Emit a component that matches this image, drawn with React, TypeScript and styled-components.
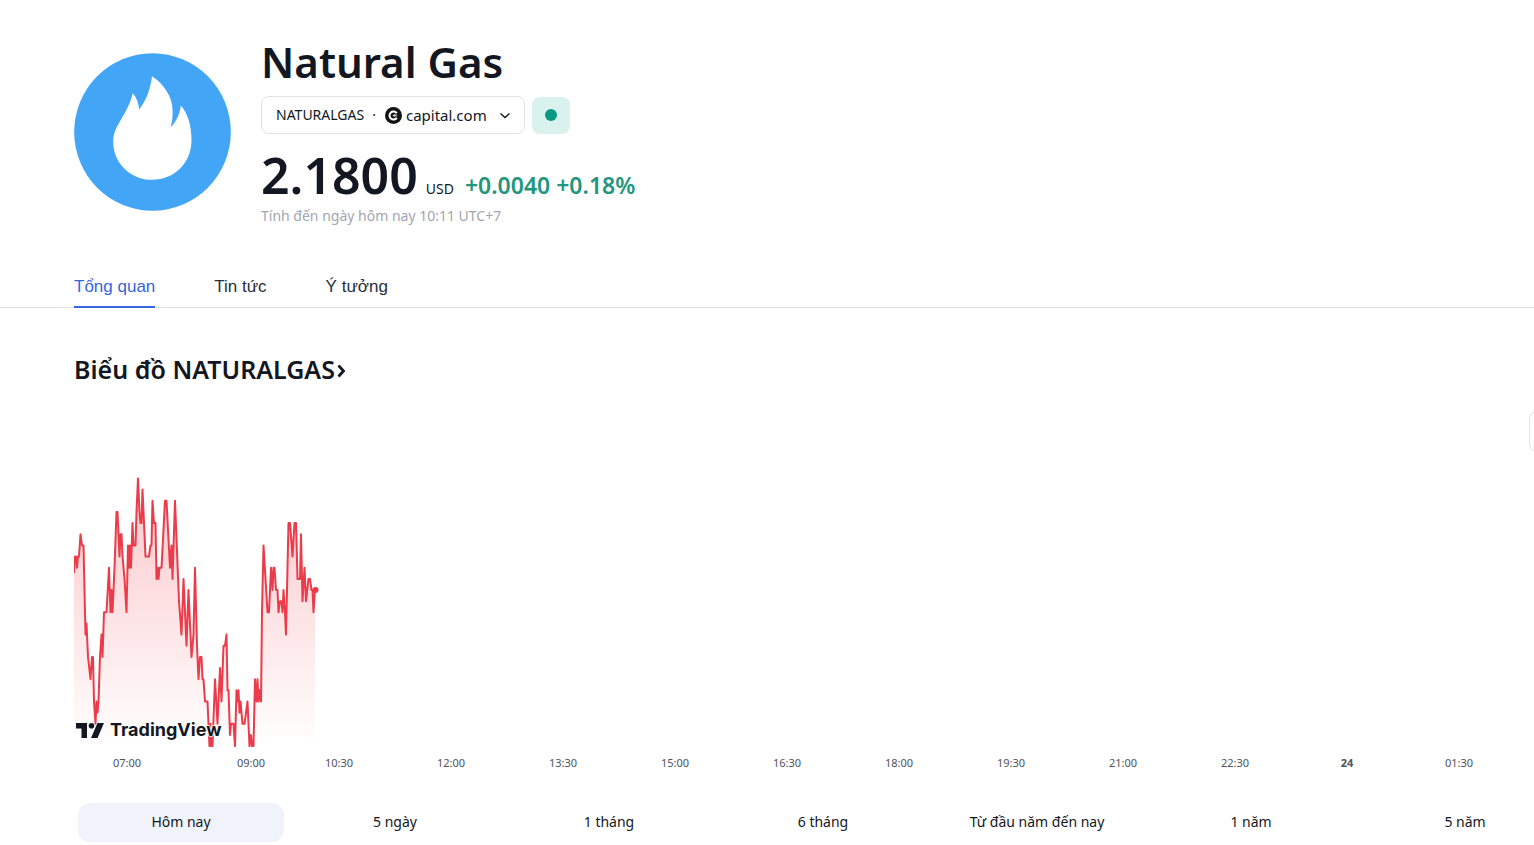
import React from "react";
import styled, { createGlobalStyle } from "styled-components";

const ui = `"Trebuchet MS", "Noto Sans", sans-serif`;

const GlobalStyle = createGlobalStyle`
  * { box-sizing: border-box; }
  body {
    margin: 0;
    background: #fff;
    color: #131722;
    font-family: ${ui};
    overflow-x: hidden;
  }
  h1, h2, p { margin: 0; }
  button { font: inherit; color: inherit; cursor: pointer; }
`;

const Page = styled.div`
  overflow: hidden;
  padding: 34px 0 4px;
`;

const Header = styled.header`
  display: flex;
  gap: 30px;
  padding-left: 74px;
`;

const Logo = styled.svg`
  width: 157px;
  height: 158px;
  margin-top: 19px;
  flex: none;
`;

const Title = styled.h1`
  font-size: 42px;
  line-height: 56px;
  font-weight: 600;
`;

const SymbolRow = styled.div`
  display: flex;
  gap: 7px;
  margin-top: 6px;
`;

const SymbolButton = styled.button`
  display: flex;
  align-items: center;
  width: 264px;
  height: 38px;
  padding: 0 13px 0 14px;
  background: #fff;
  border: 1px solid #e0e3eb;
  border-radius: 8px;
  font-size: 14px;
  line-height: 20px;
`;

const Dot = styled.span`
  margin: 0 9px 0 8px;
`;

const Exchange = styled.span`
  display: flex;
  align-items: center;
  gap: 4px;
  flex: 1;
  font-size: 15px;
`;

const Status = styled.button`
  display: flex;
  align-items: center;
  justify-content: center;
  width: 38px;
  height: 37px;
  margin-top: 1px;
  padding: 0 0 1px;
  border: 0;
  border-radius: 8px;
  background: #daf2ee;

  &::before {
    content: "";
    width: 12px;
    height: 12px;
    border-radius: 50%;
    background: #089981;
  }
`;

const PriceRow = styled.div`
  display: flex;
  align-items: baseline;
  margin-top: 13px;
  line-height: 20px;
  white-space: nowrap;
`;

const Price = styled.span`
  font-size: 50px;
  line-height: 56px;
  font-weight: 600;
`;

const Currency = styled.span`
  margin-left: 8px;
  font-size: 14px;
`;

const Change = styled.span`
  margin-left: 11px;
  font-size: 23px;
  font-weight: 600;
  color: #22967f;
`;

const AsOf = styled.p`
  margin-top: 3px;
  font-size: 14px;
  line-height: 20px;
  color: #a3a6af;
`;

const Tabs = styled.nav`
  display: flex;
  gap: 59px;
  margin-top: 38px;
  padding-left: 74px;
  border-bottom: 1px solid #e0e3eb;
  font-family: "Liberation Sans", Arial, sans-serif;
  font-size: 17px;
  line-height: 20px;
`;

const Tab = styled.a<{ $active?: boolean }>`
  padding: 13px 0 9px;
  margin-bottom: -1px;
  border-bottom: 2px solid ${(p) => (p.$active ? "#3565e0" : "transparent")};
  color: ${(p) => (p.$active ? "#3565e0" : "#2a2e39")};
  text-decoration: none;
`;

const Section = styled.main`
  margin: 45px -38px 0 74px;
`;

const Heading = styled.h2`
  font-size: 25px;
  line-height: 32px;
  font-weight: 600;

  a {
    display: inline-flex;
    align-items: center;
    gap: 2px;
    color: inherit;
    text-decoration: none;
  }

  svg { margin-top: 4px; }
`;

const Toolbar = styled.div`
  display: flex;
  justify-content: flex-end;
  margin-top: 26px;
`;

const ToolButton = styled.button`
  width: 43px;
  height: 41px;
  background: #fff;
  border: 1px solid #e0e3eb;
  border-radius: 8px;
`;

const Chart = styled.div`
  position: relative;
  height: 296px;
`;

const Plot = styled.svg`
  display: block;
  width: 246px;
  height: 296px;
`;

const Brand = styled.a`
  position: absolute;
  left: 2px;
  bottom: 4px;
  display: flex;
  align-items: center;
  gap: 6px;
  color: #131722;
  font-family: Inter, sans-serif;
  font-size: 18px;
  line-height: 28px;
  font-weight: 700;
  text-decoration: none;
  text-shadow: 0 0 1px #fff, 1px 0 1px #fff, -1px 0 1px #fff, 0 1px 1px #fff, 0 -1px 1px #fff;
`;

const Axis = styled.div`
  display: grid;
  grid-template-columns: 53fr 124fr 88fr repeat(10, 112fr) 75fr;
  margin: 5px 38px 0 0;
  font-size: 11px;
  line-height: 20px;
  color: #50535e;

  &::before { content: ""; }
`;

const Tick = styled.span<{ $strong?: boolean }>`
  display: flex;
  justify-content: center;
  width: 0;
  white-space: nowrap;
  font-weight: ${(p) => (p.$strong ? 700 : 400)};
`;

const Ranges = styled.div`
  display: grid;
  grid-template-columns: repeat(7, 1fr);
  gap: 8px;
  margin-top: 30px;
  padding: 0 4px;
`;

const Range = styled.button<{ $active?: boolean }>`
  height: 39px;
  padding: 0 0 1px;
  border: 0;
  border-radius: 12px;
  background: ${(p) => (p.$active ? "#f0f3fa" : "transparent")};
  font-size: 14px;
  line-height: 20px;
`;

// Each point is [x, price level], level 0 being the day's high.
const points: [number, number][] = [
  [0, 8.5], [1, 7], [2, 7], [3, 8], [4, 7], [5, 7], [6.5, 5], [8, 6], [9.5, 6], [11.5, 14], [12.5, 13],
  [14, 16], [16.5, 18], [18, 16], [19, 16], [20, 20], [21.5, 22], [22.5, 20], [23.5, 21], [24.5, 20],
  [26, 16], [27.5, 14], [28.5, 16], [30, 12], [32.5, 12], [35, 8], [36.5, 12], [37.5, 10], [38.5, 12],
  [40.5, 8], [42.5, 3], [43.5, 3], [45.5, 7], [46.5, 5], [47.5, 5], [48.5, 7], [50.5, 9], [52.5, 12],
  [54, 6], [55, 8], [56, 6], [57, 8], [58.5, 4], [59.5, 6], [61.5, 6], [62.5, 3], [64, 0], [65.5, 3],
  [66.5, 4], [67.5, 4], [68.5, 1], [71.5, 7], [75, 7], [76.5, 6], [77.5, 6], [78.5, 2], [80, 4],
  [81.5, 4], [82.5, 9], [83.5, 8], [84.5, 9], [85.5, 8], [87.5, 8], [91, 2], [92.5, 2], [96, 8],
  [97.5, 6], [98.5, 9], [101, 2], [105, 11], [107.5, 14], [109.5, 9], [112.5, 15], [114.5, 10],
  [117.5, 16], [119.5, 14], [121, 8], [123, 15], [124.5, 18], [126, 16], [127.5, 16], [128.5, 18],
  [129.5, 18], [131, 20], [133.5, 20], [135.5, 24], [136.5, 22], [137.5, 24], [138.5, 24], [141, 18],
  [143.5, 22], [146, 17], [147.5, 20], [149.5, 15], [151, 15], [152.5, 14], [153.5, 19], [154.5, 19],
  [156, 23], [157, 22], [159.5, 22], [161, 24], [162.5, 19], [163.5, 20], [164.5, 19], [165.5, 21],
  [166.5, 20], [168.5, 22], [170.5, 22], [173.5, 20], [175.5, 24], [177, 23], [178, 24], [179.5, 24],
  [181, 18], [182.5, 20], [183.5, 18], [184.5, 20], [185.5, 19], [187, 20], [188, 12], [189.5, 6],
  [193.5, 12], [195, 12], [197, 8], [198.5, 10], [199.5, 8], [200.5, 8], [202, 10], [203.5, 10],
  [204.5, 12], [206, 11], [207.5, 11], [208.5, 12], [209.5, 10], [211, 12], [212, 14], [214.5, 4],
  [216, 4], [218.5, 7], [220.5, 4], [222, 4], [223.5, 9], [226, 9], [227, 5], [228.5, 11],
  [230.5, 8], [232, 11], [234.5, 9], [236, 9], [237.5, 10], [238.5, 10], [239.5, 12], [241, 10],
];

const levelY = (level: number) => 26.5 + level * 11.15;
const line = points.map(([x, l], i) => `${i ? "L" : "M"}${x} ${levelY(l).toFixed(1)}`).join("");

const ticks = ["07:00", "09:00", "10:30", "12:00", "13:30", "15:00", "16:30", "18:00", "19:30", "21:00", "22:30", "24", "01:30"];
const ranges = ["Hôm nay", "5 ngày", "1 tháng", "6 tháng", "Từ đầu năm đến nay", "1 năm", "5 năm"];

export default function App() {
  return (
    <Page>
      <GlobalStyle />
      <Header>
        <Logo viewBox="0 0 473 474" aria-hidden="true">
          <ellipse cx="236.500" cy="237" rx="236" ry="237" fill="#42a5f5" />
          <path
            fill="#fff"
            d="M177 120C189 133 195 150 196 169C216 145 230 110 235 69C270 92 297 130 297 172C298 192 295 208 291 223C308 205 318 185 322 157C342 180 354 215 354 262C354 330 302 381 236 381C170 381 118 330 118 266C118 240 128 222 140 202C158 172 170 150 177 120Z"
          />
        </Logo>
        <div>
          <Title>Natural Gas</Title>
          <SymbolRow>
            <SymbolButton type="button">
              NATURALGAS
              <Dot>·</Dot>
              <Exchange>
                <svg width="17" height="17" viewBox="0 0 17 17" aria-hidden="true">
                  <circle cx="8.500" cy="8.500" r="8.500" fill="#131313" />
                  <path d="M11.800 6.200A4 4 0 1 0 11.800 10.800" fill="none" stroke="#fff" strokeWidth="2" />
                  <path d="M7.500 8.500L9.800 7V10Z" fill="#fff" />
                  <circle cx="11" cy="8.500" r="1.200" fill="#a8a08c" />
                </svg>
                capital.com
              </Exchange>
              <svg width="12" height="12" viewBox="0 0 12 12" fill="none" stroke="#131722" strokeWidth="1.500" aria-hidden="true">
                <path d="M1.500 4.500L6 8.500L10.500 4.500" />
              </svg>
            </SymbolButton>
            <Status type="button" aria-label="Thị trường mở cửa" />
          </SymbolRow>
          <PriceRow>
            <Price>2.1800</Price>
            <Currency>USD</Currency>
            <Change>+0.0040 +0.18%</Change>
          </PriceRow>
          <AsOf>Tính đến ngày hôm nay 10:11 UTC+7</AsOf>
        </div>
      </Header>

      <Tabs>
        <Tab href="#overview" $active>Tổng quan</Tab>
        <Tab href="#news">Tin tức</Tab>
        <Tab href="#ideas">Ý tưởng</Tab>
      </Tabs>

      <Section>
        <Heading>
          <a href="#chart">
            Biểu đồ NATURALGAS
            <svg width="9" height="14" viewBox="0 0 9 14" fill="none" stroke="#131722" strokeWidth="2.800" aria-hidden="true">
              <path d="M1.500 1.500L6.500 7L1.500 12.500" />
            </svg>
          </a>
        </Heading>
        <Toolbar>
          <ToolButton type="button" aria-label="Kiểu biểu đồ" />
        </Toolbar>
        <Chart>
          <Plot viewBox="0 0 246 296" aria-hidden="true">
            <defs>
              <linearGradient id="area" gradientUnits="userSpaceOnUse" x1="0" y1="26" x2="0" y2="296">
                <stop offset="0" stopColor="#f23645" stopOpacity="0.28" />
                <stop offset="1" stopColor="#f23645" stopOpacity="0" />
              </linearGradient>
            </defs>
            <path d={`${line}V296H0Z`} fill="url(#area)" />
            <path d={line} fill="none" stroke="#ec3b4a" strokeWidth="2" strokeLinejoin="round" />
            <circle cx="241.500" cy={levelY(10)} r="3" fill="#f23645" />
          </Plot>
          <Brand href="#tradingview">
            <svg width="28" height="15" viewBox="0 0 28 15" fill="#131722" aria-hidden="true">
              <path d="M0 0H11V15H5.500V5.500H0Z" />
              <circle cx="15.500" cy="2.800" r="2.800" />
              <path d="M21.500 0H28L21.500 15H15Z" />
            </svg>
            TradingView
          </Brand>
        </Chart>
        <Axis>
          {ticks.map((t) => (
            <Tick key={t} $strong={t === "24"}>{t}</Tick>
          ))}
        </Axis>
        <Ranges>
          {ranges.map((r, i) => (
            <Range key={r} type="button" $active={i === 0}>{r}</Range>
          ))}
        </Ranges>
      </Section>
    </Page>
  );
}
